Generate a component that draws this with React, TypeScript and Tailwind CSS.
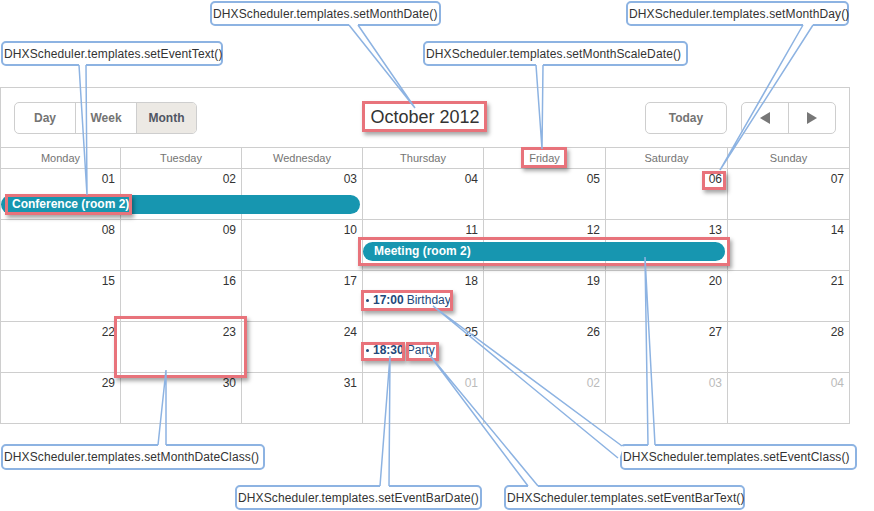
import React from 'react';

const dayNames = ['Monday', 'Tuesday', 'Wednesday', 'Thursday', 'Friday', 'Saturday', 'Sunday'];

const weeks: { d: string; next?: boolean }[][] = [
  ['01', '02', '03', '04', '05', '06', '07'].map((d) => ({ d })),
  ['08', '09', '10', '11', '12', '13', '14'].map((d) => ({ d })),
  ['15', '16', '17', '18', '19', '20', '21'].map((d) => ({ d })),
  ['22', '23', '24', '25', '26', '27', '28'].map((d) => ({ d })),
  [
    { d: '29' },
    { d: '30' },
    { d: '31' },
    { d: '01', next: true },
    { d: '02', next: true },
    { d: '03', next: true },
    { d: '04', next: true },
  ],
];

// callout boxes (outer edges)
const callouts = [
  { text: 'DHXScheduler.templates.setMonthDate()', left: 210, top: 1, w: 231, h: 25 },
  { text: 'DHXScheduler.templates.setEventText()', left: 1, top: 41, w: 222, h: 25 },
  { text: 'DHXScheduler.templates.setMonthScaleDate()', left: 423, top: 41, w: 265, h: 25 },
  { text: 'DHXScheduler.templates.setMonthDay()', left: 626, top: 1, w: 223, h: 25 },
  { text: 'DHXScheduler.templates.setMonthDateClass()', left: 1, top: 444, w: 264, h: 26 },
  { text: 'DHXScheduler.templates.setEventBarDate()', left: 235, top: 485, w: 247, h: 25 },
  { text: 'DHXScheduler.templates.setEventBarText()', left: 504, top: 485, w: 241, h: 25 },
  { text: 'DHXScheduler.templates.setEventClass()', left: 620, top: 444, w: 237, h: 26 },
];

// leader wedges: two base points on the callout edge, one tip on the target
const wedges = [
  { a: [349, 25], b: [358, 25], tip: [415, 108] },
  { a: [79, 65], b: [86, 65], tip: [87, 195] },
  { a: [536, 65], b: [543, 65], tip: [542, 149] },
  { a: [803, 25], b: [813, 25], tip: [720, 170] },
  { a: [158, 445], b: [166, 445], tip: [166, 370] },
  { a: [380, 486], b: [389, 486], tip: [390, 356] },
  { a: [528, 486], b: [538, 486], tip: [428, 353] },
  { a: [622, 446], b: [618, 458], tip: [433, 306] },
  { a: [648, 445], b: [655, 445], tip: [645, 257] },
];

// red highlight frames
const marks = [
  { left: 5, top: 194, w: 127, h: 21 },
  { left: 362, top: 101, w: 125, h: 31 },
  { left: 521, top: 147, w: 46, h: 21 },
  { left: 702, top: 171, w: 24, h: 19 },
  { left: 358, top: 237, w: 372, h: 29 },
  { left: 361, top: 290, w: 92, h: 21 },
  { left: 114, top: 316, w: 133, h: 62 },
  { left: 361, top: 342, w: 44, h: 19 },
  { left: 406, top: 342, w: 33, h: 19 },
];

function Triangle({ dir }: { dir: 'left' | 'right' }) {
  return (
    <svg width="10" height="12" viewBox="0 0 10 12">
      {dir === 'left' ? <polygon points="10,0 10,12 0,6" fill="#777" /> : <polygon points="0,0 0,12 10,6" fill="#777" />}
    </svg>
  );
}

function BarEvent({ label, className }: { label: string; className: string }) {
  return (
    <div
      className={`absolute h-[19px] rounded-[10px] bg-[#1796b0] pl-[11px] text-[12px] font-bold leading-[19px] text-white ${className}`}
    >
      {label}
    </div>
  );
}

function LineEvent({ time, label, className }: { time: string; label: string; className: string }) {
  return (
    <div className={`absolute flex items-center text-[12px] leading-[14px] text-[#22487a] ${className}`}>
      <span className="mr-[4px] h-[3px] w-[3px] rounded-full bg-[#22487a]"></span>
      <span className="font-bold">{time}</span>
      <span className="ml-[3px]">{label}</span>
    </div>
  );
}

export default function App() {
  return (
    <div className="relative h-[511px] w-[874px] overflow-hidden bg-white font-['Liberation_Sans',Arial,sans-serif]">
      <div className="pt-[87px]">
        <div className="w-[850px] border-l border-t border-[#cecece]">
          {/* Navigation */}
          <div className="grid h-[60px] grid-cols-[1fr_auto_1fr] items-center border-b border-r border-[#cecece] px-[13px]">
            <div className="flex h-[32px] w-[183px] overflow-hidden rounded-[5px] border border-[#cecece] text-[12px] font-bold">
              <div className="flex w-[61px] items-center justify-center border-r border-[#cecece] text-[#747473]">Day</div>
              <div className="flex w-[61px] items-center justify-center border-r border-[#cecece] text-[#747473]">Week</div>
              <div className="flex flex-1 items-center justify-center bg-[#ece9e4] text-[#505563]">Month</div>
            </div>
            <div className="text-[18px] text-[#333]">October 2012</div>
            <div className="flex justify-end gap-[14px]">
              <div className="flex h-[32px] w-[82px] items-center justify-center rounded-[5px] border border-[#cecece] text-[12px] font-bold text-[#747473]">
                Today
              </div>
              <div className="flex h-[32px] w-[95px] rounded-[5px] border border-[#cecece]">
                <div className="flex w-[47px] items-center justify-center border-r border-[#cecece]">
                  <Triangle dir="left" />
                </div>
                <div className="flex flex-1 items-center justify-center">
                  <Triangle dir="right" />
                </div>
              </div>
            </div>
          </div>

          {/* Day names */}
          <div className="grid h-[21px] grid-cols-[120px_121px_121px_121px_122px_122px_122px] border-b border-[#cecece]">
            {dayNames.map((name) => (
              <div key={name} className="flex items-center justify-center border-r border-[#cecece] pt-px text-[11px] text-[#747473]">
                {name}
              </div>
            ))}
          </div>

          {/* Weeks */}
          {weeks.map((week, wi) => (
            <div
              key={wi}
              className="relative grid h-[51px] grid-cols-[120px_121px_121px_121px_122px_122px_122px] border-b border-[#cecece]"
            >
              {week.map((cell, ci) => (
                <div
                  key={ci}
                  className={`border-r border-[#cecece] pr-[5px] pt-[3px] text-right text-[12px] leading-[14px] ${
                    cell.next ? 'text-[#bbb]' : 'text-[#333]'
                  }`}
                >
                  {cell.d}
                </div>
              ))}
              {wi === 0 && <BarEvent label="Conference (room 2)" className="left-0 top-[26px] w-[359px]" />}
              {wi === 1 && <BarEvent label="Meeting (room 2)" className="left-[362px] top-[22px] w-[362px]" />}
              {wi === 2 && <LineEvent time="17:00" label="Birthday" className="left-[365px] top-[22px]" />}
              {wi === 3 && <LineEvent time="18:30" label="Party" className="left-[365px] top-[21px]" />}
            </div>
          ))}
        </div>
      </div>

      {/* Highlight frames */}
      {marks.map((m, i) => (
        <div
          key={i}
          className="absolute border-[3px] border-[#e8737b] shadow-[2px_3px_4px_rgba(0,0,0,0.35)]"
          style={{ left: m.left, top: m.top, width: m.w, height: m.h }}
        />
      ))}

      {/* Callouts */}
      {callouts.map((c) => (
        <div
          key={c.text}
          className="absolute flex items-center whitespace-nowrap rounded-[5px] border-2 border-[#8db3e2] bg-white pl-px text-[12px] tracking-[0.12px] text-[#333]"
          style={{ left: c.left, top: c.top, width: c.w, height: c.h }}
        >
          {c.text}
        </div>
      ))}

      {/* Leader lines */}
      <svg className="pointer-events-none absolute left-0 top-0" width="874" height="511">
        {wedges.map((w, i) => (
          <g key={i}>
            <line
              x1={w.a[0]}
              y1={w.a[1]}
              x2={w.b[0]}
              y2={w.b[1]}
              stroke="#fff"
              strokeWidth="3"
            />
            <polyline
              points={`${w.a[0]},${w.a[1]} ${w.tip[0]},${w.tip[1]} ${w.b[0]},${w.b[1]}`}
              fill="none"
              stroke="#8db3e2"
              strokeWidth="1.5"
            />
          </g>
        ))}
      </svg>
    </div>
  );
}
